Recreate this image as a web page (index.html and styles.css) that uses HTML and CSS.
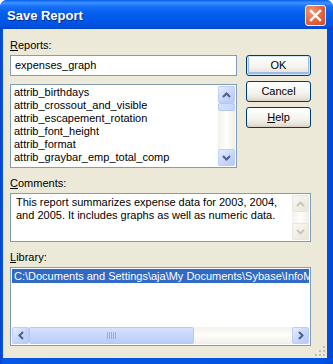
FILE: index.html
```html
<!DOCTYPE html>
<html lang="en">
<head>
    <meta charset="UTF-8">
    <title>Save Report</title>
    <link rel="stylesheet" href="styles.css">
</head>
<body>
<div class="window">
    <div class="title_bar">
        <span class="title_text">Save Report</span>
        <div class="close_button">
            <svg width="21" height="21" viewBox="0 0 21 21">
                <path d="M6 6 L15 15 M15 6 L6 15" stroke="#ffffff" stroke-width="2.4" stroke-linecap="square" fill="none"/>
            </svg>
        </div>
    </div>
    <div class="client">
        <div class="top_part">
            <div class="left_col">
                <div class="label"><u>R</u>eports:</div>
                <div class="text_input">expenses_graph</div>
                <div class="list_box reports_list">
                    <div class="list_items">
                        <div class="list_item">attrib_birthdays</div>
                        <div class="list_item">attrib_crossout_and_visible</div>
                        <div class="list_item">attrib_escapement_rotation</div>
                        <div class="list_item">attrib_font_height</div>
                        <div class="list_item">attrib_format</div>
                        <div class="list_item">attrib_graybar_emp_total_comp</div>
                    </div>
                    <div class="v_scroll">
                        <div class="scroll_btn">
                            <svg width="9" height="6" viewBox="0 0 9 6"><polyline points="1,5 4.5,1.5 8,5" stroke="#4d6185" stroke-width="2" fill="none"/></svg>
                        </div>
                        <div class="v_thumb"></div>
                        <div class="v_track"></div>
                        <div class="scroll_btn">
                            <svg width="9" height="6" viewBox="0 0 9 6"><polyline points="1,1 4.5,4.5 8,1" stroke="#4d6185" stroke-width="2" fill="none"/></svg>
                        </div>
                    </div>
                </div>
            </div>
            <div class="buttons">
                <div class="button default_button">OK</div>
                <div class="button">Cancel</div>
                <div class="button"><u>H</u>elp</div>
            </div>
        </div>

        <div class="label section_label"><u>C</u>omments:</div>
        <div class="list_box comments_box">
            <div class="comments_text">This report summarizes expense data for 2003, 2004, and 2005. It includes graphs as well as numeric data.</div>
            <div class="v_scroll">
                <div class="scroll_btn disabled_btn">
                    <svg width="9" height="6" viewBox="0 0 9 6"><polyline points="1,5 4.5,1.5 8,5" stroke="#c9c7ba" stroke-width="2" fill="none"/></svg>
                </div>
                <div class="v_track disabled_track"></div>
                <div class="scroll_btn disabled_btn">
                    <svg width="9" height="6" viewBox="0 0 9 6"><polyline points="1,1 4.5,4.5 8,1" stroke="#c9c7ba" stroke-width="2" fill="none"/></svg>
                </div>
            </div>
        </div>

        <div class="label section_label"><u>L</u>ibrary:</div>
        <div class="list_box library_box">
            <div class="library_rows">
                <div class="selected_row">C:\Documents and Settings\aja\My Documents\Sybase\InfoM</div>
            </div>
            <div class="h_scroll">
                <div class="scroll_btn">
                    <svg width="6" height="9" viewBox="0 0 6 9"><polyline points="5,1 1.5,4.5 5,8" stroke="#4d6185" stroke-width="2" fill="none"/></svg>
                </div>
                <div class="h_thumb">
                    <svg width="9" height="7" viewBox="0 0 9 7">
                        <path d="M0.5 0 V7 M2.5 0 V7 M4.5 0 V7 M6.5 0 V7 M8.5 0 V7" stroke="#8eaef2" stroke-width="1"/>
                    </svg>
                </div>
                <div class="h_track"></div>
                <div class="scroll_btn">
                    <svg width="6" height="9" viewBox="0 0 6 9"><polyline points="1,1 4.5,4.5 1,8" stroke="#4d6185" stroke-width="2" fill="none"/></svg>
                </div>
            </div>
        </div>

        <svg class="grip" width="12" height="12" viewBox="0 0 12 12">
            <rect x="9" y="1" width="2" height="2" fill="#c3bfad"/>
            <rect x="5" y="5" width="2" height="2" fill="#c3bfad"/>
            <rect x="9" y="5" width="2" height="2" fill="#c3bfad"/>
            <rect x="1" y="9" width="2" height="2" fill="#c3bfad"/>
            <rect x="5" y="9" width="2" height="2" fill="#c3bfad"/>
            <rect x="9" y="9" width="2" height="2" fill="#c3bfad"/>
        </svg>
    </div>
</div>
</body>
</html>
```

FILE: styles.css
```css
body {
    margin: 0;
    background: #ffffff;
    font-family: "Liberation Sans", Arial, sans-serif;
    font-size: 11px;
    color: #000000;
}

.window {
    width: 333px;
    height: 364px;
    display: flex;
    flex-direction: column;
    background: linear-gradient(90deg, #0842d0, #0756e6 3px, #0054e3 320px, #0048d8);
    border-radius: 7px 7px 0 0;
    overflow: hidden;
}

.title_bar {
    height: 29px;
    flex: none;
    display: flex;
    align-items: center;
    justify-content: space-between;
    padding: 2px 7px 0 7px;
    box-sizing: border-box;
    background: linear-gradient(#0a5ef0 0, #3d95ff 3px, #1a72fb 6px, #0860ee 12px, #0058e8 20px, #0052e0 26px, #0046d0 29px);
}

.title_text {
    color: #ffffff;
    font-weight: bold;
    font-size: 13px;
    text-shadow: 1px 1px #0a2a8c;
}

.close_button {
    width: 21px;
    height: 21px;
    box-sizing: border-box;
    border: 1px solid #ffffff;
    border-radius: 3px;
    background: radial-gradient(circle at 30% 30%, #f09878, #e0603a 60%, #c84a25);
}

.close_button svg {
    display: block;
    margin: -1px;
}

.client {
    flex: 1;
    margin: 0 6px 6px 3px;
    padding: 10px 16px 0 7px;
    background: #ece9d8;
    position: relative;
}

.top_part {
    display: flex;
    gap: 9px;
}

.left_col {
    width: 227px;
}

.label {
    height: 13px;
    line-height: 13px;
    margin-bottom: 3px;
}

.section_label {
    margin-top: 9px;
}

.text_input {
    height: 21px;
    box-sizing: border-box;
    border: 1px solid #7f9db9;
    background: #ffffff;
    padding: 0 4px;
    line-height: 19px;
}

.list_box {
    box-sizing: border-box;
    border: 1px solid #7f9db9;
    background: #ffffff;
    padding: 1px;
    display: flex;
    overflow: hidden;
}

.reports_list {
    margin-top: 8px;
    height: 84px;
}

.list_items {
    flex: 1;
    overflow: hidden;
    padding-left: 2px;
}

.list_item {
    height: 13px;
    line-height: 13px;
    white-space: nowrap;
}

.v_scroll {
    width: 17px;
    flex: none;
    display: flex;
    flex-direction: column;
    background: linear-gradient(90deg, #f3f1ec, #fefefb 50%, #f0eee6);
}

.scroll_btn {
    width: 17px;
    height: 17px;
    flex: none;
    box-sizing: border-box;
    border: 1px solid #bccdf6;
    border-radius: 2px;
    background: linear-gradient(135deg, #e6eefe, #c9d8fc 50%, #b6c9f6);
    display: flex;
    align-items: center;
    justify-content: center;
}

.disabled_btn {
    border-color: #e8e6dc;
    background: linear-gradient(135deg, #f8f7f2, #efede4 60%, #e8e6dc);
}

.v_thumb {
    height: 8px;
    flex: none;
    box-sizing: border-box;
    border: 1px solid #b4c8f6;
    border-radius: 2px;
    background: linear-gradient(90deg, #d4e0fd, #c4d5fb);
}

.v_track {
    flex: 1;
}

.buttons {
    width: 65px;
    margin-top: 16px;
    display: flex;
    flex-direction: column;
    gap: 5px;
}

.button {
    height: 21px;
    box-sizing: border-box;
    border: 1px solid #003c74;
    border-radius: 3px;
    background: linear-gradient(#ffffff, #f5f4ef 55%, #e7e4da 85%, #d6d0c5);
    text-align: center;
    line-height: 19px;
}

.default_button {
    box-shadow: inset 0 0 0 1px #cee7ff, inset 0 -1px 0 2px #9fb9ea;
}

.comments_box {
    height: 49px;
    width: 301px;
}

.comments_text {
    flex: 1;
    padding: 1px 4px 0 4px;
    line-height: 13px;
}

.library_box {
    height: 79px;
    width: 301px;
    flex-direction: column;
}

.library_rows {
    flex: 1;
    overflow: hidden;
}

.selected_row {
    height: 14px;
    line-height: 14px;
    padding-left: 2px;
    background: #316ac5;
    color: #ffffff;
    white-space: nowrap;
    overflow: hidden;
}

.h_scroll {
    height: 17px;
    flex: none;
    display: flex;
    background: linear-gradient(#f3f1ec, #fefefb 50%, #f0eee6);
}

.h_thumb {
    width: 165px;
    flex: none;
    box-sizing: border-box;
    border: 1px solid #b4c8f6;
    border-radius: 2px;
    background: linear-gradient(#d6e2fd, #c4d5fb 60%, #b9cdf9);
    display: flex;
    align-items: center;
    justify-content: center;
}

.h_track {
    flex: 1;
}

.grip {
    position: absolute;
    right: 1px;
    bottom: 1px;
}
```
